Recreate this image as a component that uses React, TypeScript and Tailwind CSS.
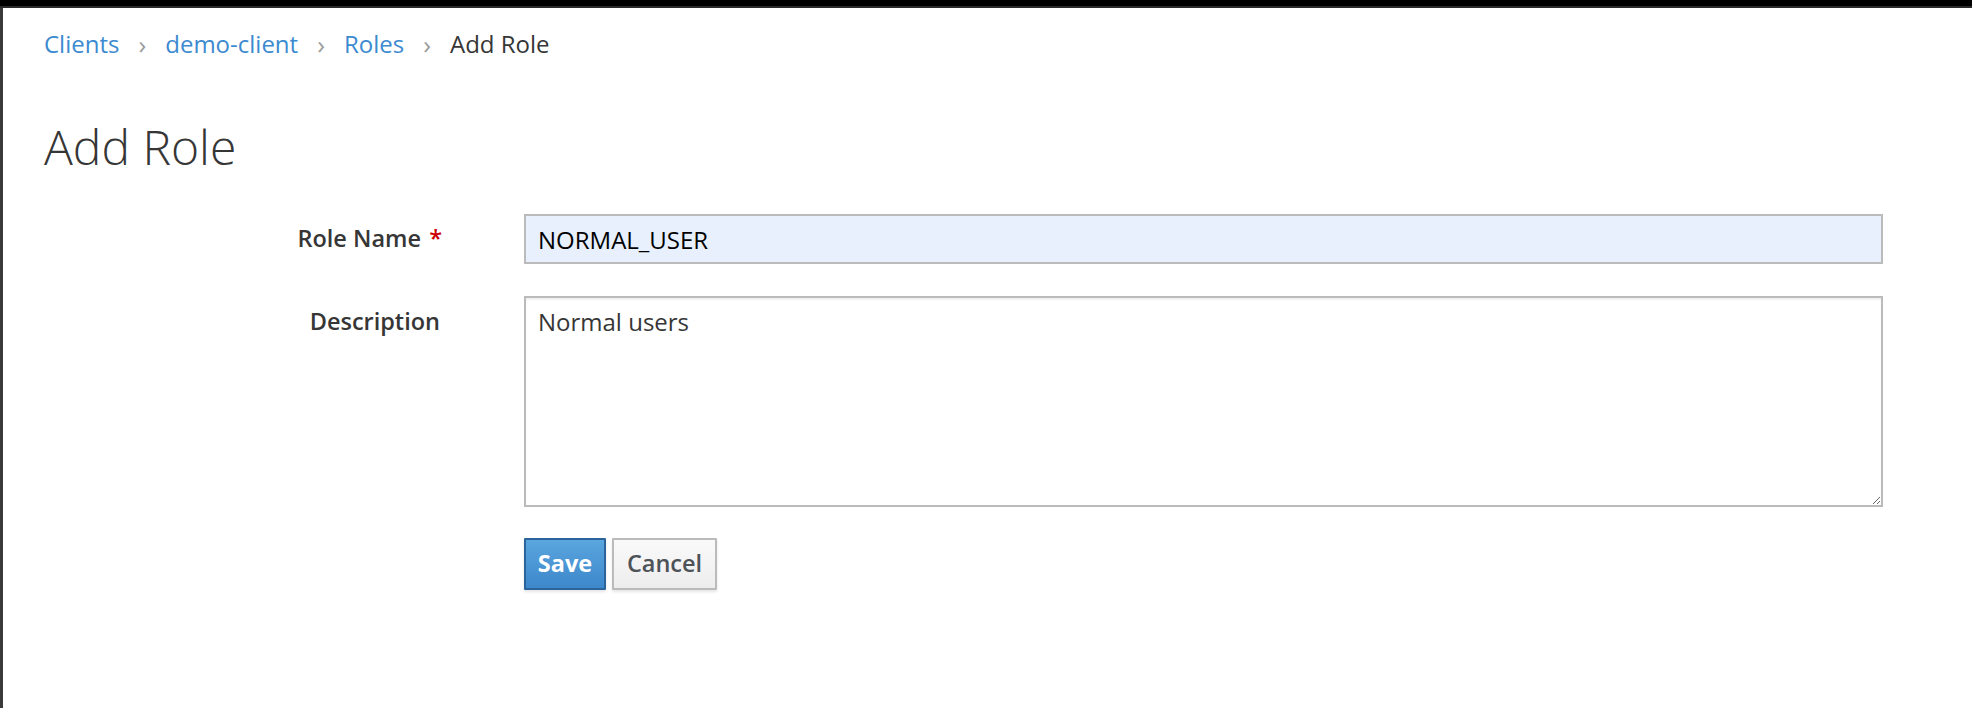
export default function App() {
  return (
    <div className="min-h-screen w-full bg-black pt-[6px]" style={{ fontFamily: '"Open Sans", "Noto Sans", sans-serif' }}>
      <div className="h-[2px] bg-[#2a2a2a]" />
      <div className="flex min-h-[700px]">
        <div className="w-[3px] shrink-0 bg-[#3a3a3a]" />
        <main className="flex-1 bg-white pl-[41px] pr-[89px]">
          {/* breadcrumb */}
          <nav className="flex items-center h-[71px] text-[24px] text-[#363636]">
            <a className="text-[#3c8ad0]">Clients</a>
            <span className="mx-[19px] text-[#9c9c9c] text-[26px] leading-none">›</span>
            <a className="text-[#3c8ad0]">demo-client</a>
            <span className="mx-[19px] text-[#9c9c9c] text-[26px] leading-none">›</span>
            <a className="text-[#3c8ad0]">Roles</a>
            <span className="mx-[19px] text-[#9c9c9c] text-[26px] leading-none">›</span>
            <span>Add Role</span>
          </nav>

          <h1 className="mt-[44px] text-[48px] font-light leading-none text-[#363636]">Add Role</h1>

          <form className="mt-[43px] flex flex-col gap-[32px]">
            <div className="flex items-center">
              <label className="w-[398px] shrink-0 text-right text-[23.5px] font-semibold text-[#363636]">
                Role Name <span className="ml-[2px] text-[#cc0000]">*</span>
              </label>
              <div className="ml-[82px] flex-1">
                <input
                  defaultValue="NORMAL_USER"
                  className="block h-[50px] w-full border-2 border-[#bbbbbb] bg-[#e8f0fe] px-[12px] text-[24px] text-black outline-none"
                />
              </div>
            </div>

            <div className="flex items-start">
              <label className="w-[396px] shrink-0 pt-[8px] text-right text-[23.5px] font-semibold text-[#363636]">
                Description
              </label>
              <div className="ml-[84px] flex-1">
                <textarea
                  defaultValue="Normal users"
                  className="block h-[211px] w-full resize-y border-2 border-[#bbbbbb] bg-white px-[12px] py-[6px] text-[24px] text-[#363636] shadow-[inset_0_2px_2px_rgba(3,3,3,0.06)] outline-none"
                />
              </div>
            </div>
          </form>

          <div className="mt-[31px] ml-[480px] flex gap-[6px]">
            <button className="h-[52px] w-[82px] rounded-[1px] border-2 border-[#2b639a] bg-gradient-to-b from-[#5aa6de] to-[#3d87cb] text-[23.5px] font-bold text-white shadow-[0_2px_3px_rgba(3,3,3,0.1)]">
              Save
            </button>
            <button className="h-[52px] w-[105px] rounded-[1px] border-2 border-[#bbbbbb] bg-gradient-to-b from-[#fafafa] to-[#ededed] text-[23.5px] font-semibold text-[#4d5258] shadow-[0_2px_3px_rgba(3,3,3,0.1)]">
              Cancel
            </button>
          </div>
        </main>
      </div>
    </div>
  );
}
